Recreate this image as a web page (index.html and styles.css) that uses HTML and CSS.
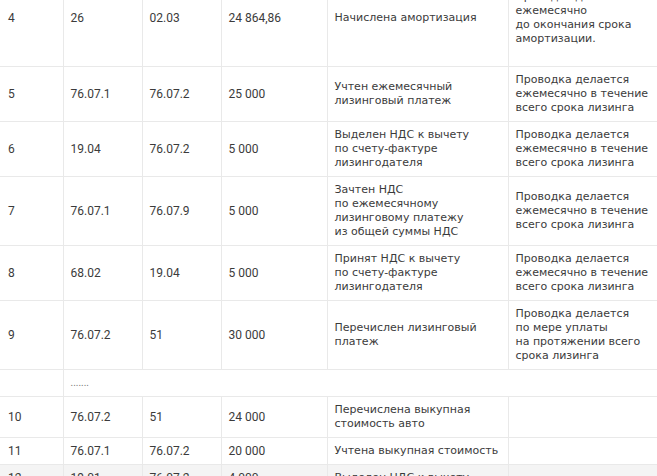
FILE: index.html
```html
<!DOCTYPE html>
<html lang="ru">
<head>
<meta charset="utf-8">
<link rel="stylesheet" href="styles.css">
</head>
<body>
<table class="ledger">
  <colgroup>
    <col class="c-num"><col class="c-dt"><col class="c-kt"><col class="c-sum"><col class="c-desc"><col class="c-note">
  </colgroup>
  <tbody>
    <tr class="tall">
      <td class="n">4</td><td class="n">26</td><td class="n">02.03</td><td class="n">24 864,86</td>
      <td class="t">Начислена амортизация</td>
      <td class="t">Проводка делается<br>ежемесячно<br>до окончания срока<br>амортизации.</td>
    </tr>
    <tr>
      <td class="n">5</td><td class="n">76.07.1</td><td class="n">76.07.2</td><td class="n">25 000</td>
      <td class="t">Учтен ежемесячный<br>лизинговый платеж</td>
      <td class="t">Проводка делается<br>ежемесячно в течение<br>всего срока лизинга</td>
    </tr>
    <tr>
      <td class="n">6</td><td class="n">19.04</td><td class="n">76.07.2</td><td class="n">5 000</td>
      <td class="t">Выделен НДС к вычету<br>по счету-фактуре<br>лизингодателя</td>
      <td class="t">Проводка делается<br>ежемесячно в течение<br>всего срока лизинга</td>
    </tr>
    <tr>
      <td class="n">7</td><td class="n">76.07.1</td><td class="n">76.07.9</td><td class="n">5 000</td>
      <td class="t">Зачтен НДС<br>по ежемесячному<br>лизинговому платежу<br>из общей суммы НДС</td>
      <td class="t">Проводка делается<br>ежемесячно в течение<br>всего срока лизинга</td>
    </tr>
    <tr>
      <td class="n">8</td><td class="n">68.02</td><td class="n">19.04</td><td class="n">5 000</td>
      <td class="t">Принят НДС к вычету<br>по счету-фактуре<br>лизингодателя</td>
      <td class="t">Проводка делается<br>ежемесячно в течение<br>всего срока лизинга</td>
    </tr>
    <tr>
      <td class="n">9</td><td class="n">76.07.2</td><td class="n">51</td><td class="n">30 000</td>
      <td class="t">Перечислен лизинговый<br>платеж</td>
      <td class="t">Проводка делается<br>по мере уплаты<br>на протяжении всего<br>срока лизинга</td>
    </tr>
    <tr>
      <td class="n"></td><td class="n dots" colspan="5">.......</td>
    </tr>
    <tr>
      <td class="n">10</td><td class="n">76.07.2</td><td class="n">51</td><td class="n">24 000</td>
      <td class="t">Перечислена выкупная<br>стоимость авто</td>
      <td class="t"></td>
    </tr>
    <tr>
      <td class="n">11</td><td class="n">76.07.1</td><td class="n">76.07.2</td><td class="n">20 000</td>
      <td class="t">Учтена выкупная стоимость</td>
      <td class="t"></td>
    </tr>
    <tr class="shade">
      <td class="n">12</td><td class="n">19.01</td><td class="n">76.07.2</td><td class="n">4 000</td>
      <td class="t">Выделен НДС к вычету</td>
      <td class="t"></td>
    </tr>
  </tbody>
</table>
</body>
</html>
```

FILE: styles.css
```css
html, body {
  margin: 0;
  padding: 0;
  background: #ffffff;
  overflow: hidden;
}

.ledger {
  border-collapse: collapse;
  table-layout: fixed;
  width: 657px;
  margin-top: -31px;
  color: #3b3b3b;
}

.c-num { width: 63px; }
.c-dt { width: 79px; }
.c-kt { width: 79px; }
.c-sum { width: 106px; }
.c-desc { width: 181px; }
.c-note { width: 149px; }

.ledger td {
  border: 1px solid #e9e9e9;
  padding: 6px 7px 6px 7px;
  vertical-align: middle;
  line-height: 14px;
  text-align: left;
}

.ledger td:first-child {
  border-left: none;
  padding-left: 8px;
}

.ledger td:last-child {
  border-right: none;
}

.ledger td.n {
  font-family: Roboto, "Liberation Sans", sans-serif;
  font-size: 12px;
}

.ledger td.t {
  font-family: "DejaVu Sans", Verdana, sans-serif;
  font-size: 11px;
}

.ledger td.dots {
  font-size: 10px;
  color: #777;
}

.ledger tr.tall td {
  height: 84px;
}

.ledger tr.shade td {
  background: #f4f4f4;
}
```
